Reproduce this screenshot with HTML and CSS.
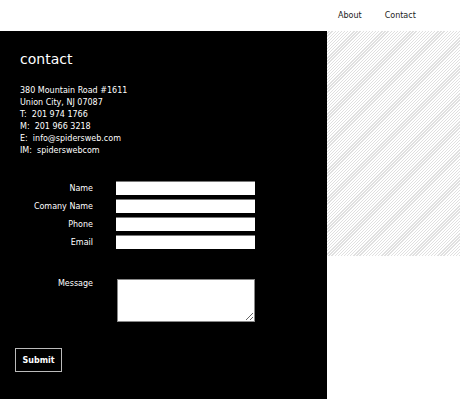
FILE: index.html
```html
<!DOCTYPE html>
<html>
<head>
  <meta charset="UTF-8">
  <title>Contact - Spiders Web</title>
  <link rel="stylesheet" href="styles.css">
</head>
<body>

  <div class="top-nav">
    <a href="#">About</a>
    <a href="#">Contact</a>
  </div>

  <div class="main">
    <div class="contact-panel">
      <h1>contact</h1>
      <div class="address">
        380 Mountain Road #1611<br>
        Union City, NJ 07087<br>
        T:&nbsp; 201 974 1766<br>
        M:&nbsp; 201 966 3218<br>
        E:&nbsp; info@spidersweb.com<br>
        IM:&nbsp; spiderswebcom
      </div>

      <form class="contact-form">
        <div class="row">
          <label>Name</label>
          <input type="text">
        </div>
        <div class="row">
          <label>Comany Name</label>
          <input type="text">
        </div>
        <div class="row">
          <label>Phone</label>
          <input type="text">
        </div>
        <div class="row">
          <label>Email</label>
          <input type="text">
        </div>
        <div class="row msg-row">
          <label>Message</label>
          <textarea></textarea>
        </div>
        <button type="submit">Submit</button>
      </form>
    </div>
    <div class="side-panel"></div>
  </div>

</body>
</html>
```

FILE: styles.css
```css
body {
  font-family: 'DejaVu Sans', Verdana, sans-serif;
  background: #fff;
  margin: 0;
  padding: 0;
}
.top-nav {
  height: 31px;
  display: flex;
  align-items: center;
  padding-left: 338px;
  gap: 23px;
}
.top-nav a {
  font-size: 8px;
  color: #222;
  text-decoration: none;
}
.main {
  display: flex;
  align-items: flex-start;
}
.contact-panel {
  width: 327px;
  height: 368px;
  background: #000;
  color: #fff;
  box-sizing: border-box;
  padding: 20px 0 0 20px;
}
.contact-panel h1 {
  font-size: 14px;
  line-height: 16px;
  font-weight: normal;
  margin: 0 0 18px 0;
}
.address {
  font-size: 8px;
  line-height: 12px;
}
.contact-form {
  margin-top: 24px;
}
.row {
  display: flex;
  align-items: center;
  margin-bottom: 4px;
}
.row label {
  width: 73px;
  text-align: right;
  font-size: 8px;
  margin-right: 23px;
}
.row input {
  width: 139px;
  height: 14px;
  box-sizing: border-box;
  border: none;
  border-top: 1px solid #777;
  background: #fff;
  margin: 0;
  padding: 0;
}
.msg-row {
  margin-top: 30px;
  align-items: flex-start;
}
.msg-row label {
  margin-top: 0;
  margin-right: 24px;
}
.msg-row textarea {
  width: 138px;
  height: 43px;
  box-sizing: border-box;
  border: 1px solid #888;
  margin: 0;
  padding: 0;
}
.contact-form button {
  display: block;
  margin: 26px 0 0 -5px;
  width: 47px;
  height: 24px;
  background: #000;
  color: #fff;
  border: 1px solid #bbb;
  font-family: inherit;
  font-size: 8px;
  font-weight: bold;
  padding: 0;
  cursor: pointer;
}
/* light diagonal hatching */
.side-panel {
  width: 133px;
  height: 225px;
  background: repeating-linear-gradient(135deg, #fff 0, #fff 1.3px, #e0e0e0 1.3px, #e0e0e0 2.2px);
}
```
